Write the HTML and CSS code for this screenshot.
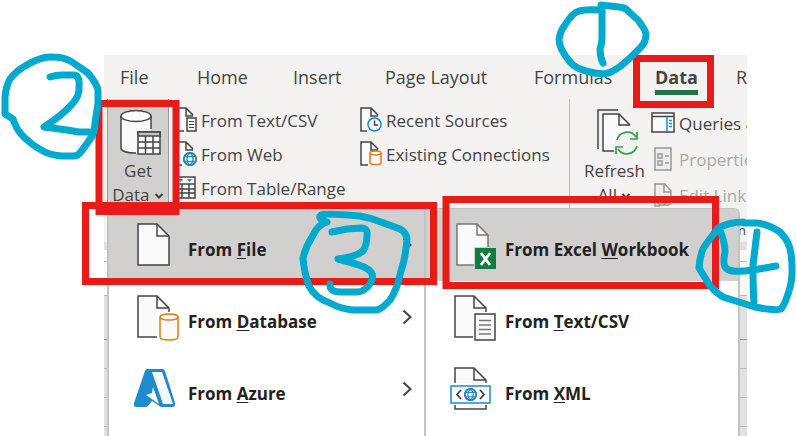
FILE: index.html
```html
<!DOCTYPE html>
<html lang="en">
<head>
<meta charset="utf-8">
<title>Get Data from an Excel workbook</title>
<link rel="stylesheet" href="styles.css">
</head>
<body>
<svg class="defs" aria-hidden="true">
  <symbol id="globe" viewBox="0 0 14 14">
    <circle cx="7" cy="7" r="6.2" fill="#fafafa"/>
    <path d="M7 .8a6.2 6.2 0 1 0 0 12.4A6.2 6.2 0 1 0 7 .8M7 .8C3 4 3 10 7 13.200M7 .8c4 3.200 4 9.200 0 12.400M1.500 4.600h11M1.500 9.400h11" fill="none" stroke="#1e8bcd" stroke-width="1.300"/>
  </symbol>
</svg>
<main class="capture">
  <div class="app">
    <nav class="tabs">
      <a href="#">File</a><a href="#">Home</a><a href="#">Insert</a><a href="#">Page Layout</a><a href="#">Formulas</a><a href="#" class="active"><span>Data</span></a><a href="#">R</a>
    </nav>
    <div class="ribbon">
      <button class="large get-data">
        <svg width="42" height="48" viewBox="0 0 42 48" fill="none" stroke="#444" stroke-width="1.500">
          <path d="M1 7v32c0 3 7 5.500 15 5.500V7z" fill="#fafafa" stroke="none"/>
          <path d="M1 7h30v15H17v22H8L1 39z" fill="#fafafa" stroke="none"/>
          <ellipse cx="16" cy="7" rx="15" ry="5.500" fill="#fafafa"/>
          <path d="M1 7v32c0 3 6 5 15 5M31 7v13"/>
          <path d="M18 23h22v22H18z" fill="#fafafa"/><path d="M18 23h22v4H18z" fill="#c0c0c0"/>
          <path d="M18 33h22M18 39h22M25.500 27v18M33 27v18"/>
        </svg>
        <span>Get</span><span>Data <svg class="caret" width="10" height="8" viewBox="0 0 10 8"><path d="M1.500 2 5 5.500 8.500 2"/></svg></span>
      </button>
      <div class="commands sources">
        <button><svg width="22" height="26" viewBox="0 0 22 26" fill="none" stroke="#444" stroke-width="1.500">
          <path d="M1 1h11l6 7v16H1z" fill="#fafafa" stroke="none"/><path d="M9 24H1V1h10l7 7M11 1v8h7"/>
          <path d="M12 11h9v13h-9z" fill="#fafafa"/><path d="M14 14.500h5M14 17.500h5M14 20.500h5" stroke-width="1"/></svg>From Text/CSV</button>
        <button><svg width="22" height="26" viewBox="0 0 22 26" fill="none" stroke="#444" stroke-width="1.500">
          <path d="M1 1h11l6 7v16H1z" fill="#fafafa" stroke="none"/><path d="M7 24H1V1h10l7 7M11 1v8h7"/>
          <use href="#globe" x="8" y="11" width="14" height="14"/></svg>From Web</button>
        <button><svg width="22" height="26" viewBox="0 0 22 26" fill="none" stroke="#444" stroke-width="1.500">
          <path d="M1 2h19v21H1z" fill="#fafafa"/><path d="M1 9h19M1 14h19M1 18h19M7 9v14M14 9v14"/>
          <path d="M3 4h5L5.500 7zM12 4h5l-2.500 3z" fill="#1e8bcd" stroke="none"/></svg>From Table/Range</button>
      </div>
      <div class="commands recent">
        <button><svg width="22" height="26" viewBox="0 0 22 26" fill="none" stroke="#444" stroke-width="1.500">
          <path d="M1 1h11l6 7v16H1z" fill="#fafafa" stroke="none"/><path d="M7 24H1V1h10l7 7M11 1v8h7"/>
          <circle cx="14.500" cy="17.500" r="6.500" fill="#fafafa" stroke="#1e8bcd"/><path d="M14.500 13.500v4.500H18"/></svg>Recent Sources</button>
        <button><svg width="22" height="26" viewBox="0 0 22 26" fill="none" stroke="#444" stroke-width="1.500">
          <path d="M1 1h11l6 7v16H1z" fill="#fafafa" stroke="none"/><path d="M8 24H1V1h10l7 7M11 1v8h7"/>
          <g fill="#fafafa" stroke="#e07b13"><path d="M10 12v10c0 2 11 2 11 0V12"/><ellipse cx="15.500" cy="12" rx="5.500" ry="2"/></g></svg>Existing Connections</button>
      </div>
      <button class="large refresh">
        <svg width="42" height="48" viewBox="0 0 42 48" fill="none" stroke="#444" stroke-width="1.500">
          <path d="M6 5h16l11 11v26H6z" fill="#fafafa" stroke="none"/>
          <path d="M1 40V1h20M17 42H6V5h16l11 11M22 5v11h11"/>
          <circle cx="30" cy="34" r="12" fill="#f3f2f1" stroke="none"/>
          <path d="M20 31a10.500 10.500 0 0 1 19-3M40 23v7h-7M40 37a10.500 10.500 0 0 1-19 3M19 45v-7h7" stroke="#35a04b" stroke-width="1.700"/>
        </svg>
        <span>Refresh</span><span>All <svg class="caret" width="10" height="8" viewBox="0 0 10 8"><path d="M1.500 2 5 5.500 8.500 2"/></svg></span>
      </button>
      <div class="commands links">
        <button><svg width="24" height="26" viewBox="0 0 24 26" fill="none" stroke="#444" stroke-width="1.500">
          <path d="M1 3h22v19H1z" fill="#fafafa"/><path d="M1 6.500h22"/><path d="M16 7v15M18 10.500h3M18 13.500h3M18 16.500h3" stroke="#1e8bcd"/></svg>Queries &amp;</button>
        <button disabled><svg width="24" height="26" viewBox="0 0 24 26" fill="none" stroke="#999" stroke-width="1.500">
          <path d="M4 2h16v22H4z" fill="#eee"/><path d="M7 8h4v4H7zM7 15h4v4H7zM14 10h4M14 17h4"/></svg>Properties</button>
        <button disabled><svg width="24" height="26" viewBox="0 0 24 26" fill="none" stroke="#999" stroke-width="1.500">
          <path d="M9 24H4V2h10l6 7v6M13 2v8h7" fill="#eee"/><rect x="7" y="17" width="8" height="6" rx="3"/><rect x="12" y="17" width="8" height="6" rx="3"/></svg>Edit Links</button>
      </div>
    </div>
    <div class="sheet"><p class="group-name">n</p><div class="formula-bar"></div><div class="name-box"></div><div class="headings"></div><div class="blank"></div><div class="cells"></div></div>

    <div class="menu main-menu">
      <button class="selected"><svg width="46" height="48" viewBox="0 0 46 48" fill="none" stroke="#444" stroke-width="1.500">
        <path d="M4 3h19l12 12v29H4z" fill="#fafafa"/><path d="M23 3v12h12"/></svg><span>From <u>F</u>ile</span><svg class="arrow" width="10" height="16" viewBox="0 0 10 16"><path d="m1.500 1.500 7 6.500-7 6.500"/></svg></button>
      <button><svg width="46" height="48" viewBox="0 0 46 48" fill="none" stroke="#444" stroke-width="1.500">
        <path d="M4 3h19l12 12v29H4z" fill="#fafafa" stroke="none"/><path d="M23 44H4V3h19l12 12v4M23 3v12h12"/>
        <path d="M23 20h23v28H23z" fill="#fff" stroke="none"/>
        <g fill="#fafafa" stroke="#e07b13"><path d="M26 24v20c0 4 18 4 18 0V24"/><ellipse cx="35" cy="24" rx="9" ry="3"/></g></svg><span>From <u>D</u>atabase</span><svg class="arrow" width="10" height="16" viewBox="0 0 10 16"><path d="m1.500 1.500 7 6.500-7 6.500"/></svg></button>
      <button><svg width="46" height="48" viewBox="0 0 46 48">
        <path d="M13 4h15q2 0 3 2l10 32q1 3-2 4H27l-9-6-4 5q-1 1-3 1H2q-3-1-2-4L11 6q1-2 2-2z" fill="#1e8bcd"/>
        <path d="M18 7h10l11 32H29z" fill="#fafafa"/><path d="m19 22 6 17-13-9 6-2z" fill="#fff"/></svg><span>From <u>A</u>zure</span><svg class="arrow" width="10" height="16" viewBox="0 0 10 16"><path d="m1.500 1.500 7 6.500-7 6.500"/></svg></button>
    </div>

    <div class="menu sub-menu">
      <button class="selected"><svg width="46" height="48" viewBox="0 0 46 48" fill="none" stroke="#777" stroke-width="1.500">
        <path d="M7 3h20l11 11v30H7z" fill="#fafafa"/><path d="M27 3v11h11"/>
        <path d="M24 26h22v22H24z" fill="#d1d0ce" stroke="none"/><path d="M25 27h21v21H25z" fill="#107c41" stroke="none"/>
        <path d="m31 32 9 12M40 32l-9 12" stroke="#fff" stroke-width="2.800"/></svg><span>From Excel <u>W</u>orkbook</span></button>
      <button><svg width="46" height="48" viewBox="0 0 46 48" fill="none" stroke="#444" stroke-width="1.500">
        <path d="M5 3h19l12 12v29H5z" fill="#fafafa" stroke="none"/><path d="M23 44H5V3h19l12 12v4M24 3v12h12"/>
        <path d="M23 19h23v29H23z" fill="#fff" stroke="none"/><path d="M25 21h20v26H25z" fill="#fafafa"/><path d="M29 27.500h12M29 32h12M29 36.500h12M29 41h12" stroke="#777"/></svg><span>From <u>T</u>ext/CSV</span></button>
      <button><svg width="46" height="48" viewBox="0 0 46 48" fill="none" stroke="#444" stroke-width="1.500">
        <path d="M5 3h19l12 12v29H5z" fill="#fafafa" stroke="none"/><path d="M5 19V3h19l12 12v4M24 3v12h12M5 40v4h31v-4"/>
        <path d="M0 18h42v22H0z" fill="#fff" stroke="none"/>
        <path d="M1 21h39v17H1z" fill="#fafafa" stroke="#1e8bcd"/><path d="m11 25-4 4.500 4 4.500M30 25l4 4.500-4 4.500" stroke-width="1.800"/>
        <use href="#globe" x="14" y="23" width="13" height="13"/></svg><span>From <u>X</u>ML</span></button>
    </div>
  </div>

  <svg class="markup" viewBox="0 0 797 436" aria-hidden="true">
    <g class="boxes">
      <rect x="636.500" y="58.500" width="74" height="46"/>
      <rect x="99" y="103.500" width="77" height="108"/>
      <rect x="85.500" y="205.500" width="348" height="76"/>
      <rect x="446" y="199.500" width="269.500" height="86"/>
    </g>
    <g class="ink">
      <path d="M601 5L619 7Q625 7 629 12L638 20Q646 31 646 34Q646 42 641 47L630 58Q616 71 608 73Q602 75 590 72Q576 69 571 63Q559 49 559 40Q560 31 565 25Q572 13 579 11Q585 9 600 10M602 6V38Q602 43 600 49Q600 57 603 63"/>
      <path d="M52 57Q65 57 72 62L88 73Q97 84 98 90V103L95 123Q95 130 92 136Q85 147 79 154Q77 156 73 156H62Q50 155 43 151Q30 144 21 134Q16 128 13 119L5 114V97Q6 86 10 79Q16 71 25 66Q41 56 52 57M50 77Q56 75 62 75H74Q80 76 79 86Q80 95 73 103Q64 114 44 127L67 130 79 132H90"/>
      <path d="M327 222Q317 219 321 215Q324 213 360 216Q371 218 381 222L400 229Q407 233 407 240Q405 260 401 271Q397 290 390 300Q382 309 377 310H353Q341 309 330 303Q315 298 309 286Q304 272 303 258Q306 246 312 237Q318 224 327 222M332 232L347 229 361 228Q368 228 367 235Q367 245 363 251Q356 257 338 259Q366 266 370 271Q375 276 370 284Q364 292 357 292H341Q329 292 330 284"/>
      <path d="M744 223H757Q768 224 780 232Q790 242 791 254Q794 276 789 291Q785 304 781 309Q775 311 755 307L723 297Q712 290 707 281L699 268Q700 254 704 247L718 228Q730 222 743 222M719 228Q725 242 725 252Q722 266 727 269Q733 273 753 270L776 266M757 232L753 265Q753 290 754 302"/>
    </g>
  </svg>
</main>
</body>
</html>
```

FILE: styles.css
```css
* { box-sizing: border-box; }
body { margin: 0; background: #fff; font-family: "Open Sans", "Noto Sans", sans-serif; color: #444; }
.defs { position: absolute; width: 0; height: 0; }
.capture { position: relative; min-height: 100vh; padding: 55px 50px 0 104px; display: flex; overflow: hidden; }
.app { position: relative; flex: 1; min-width: 0; display: flex; flex-direction: column; background: #f3f2f1; }

.tabs { display: grid; grid-template-columns: 77px 96px 92px 149px 121px 81px 1fr; padding-left: 16px; overflow: hidden; line-height: 44px; font-size: 18px; white-space: nowrap; }
.tabs a { color: #444; text-decoration: none; }
.tabs .active { font-weight: 700; }
.active span { display: inline-block; line-height: 26px; border-bottom: 5px solid #217346; }

button { display: flex; align-items: center; margin: 0; padding: 0; border: 0; background: none; font: inherit; color: inherit; text-align: left; white-space: nowrap; }
svg { flex: none; }
.caret, .arrow { fill: none; stroke: #444; stroke-width: 2; }

.ribbon { display: flex; align-items: flex-start; height: 109px; padding-left: 3px; overflow: hidden; font-size: 17px; }
.ribbon > * { flex: none; }
.large { flex-direction: column; height: 109px; line-height: 24px; }
.large svg:first-child { margin: 0 0 2px 6px; }
.large .caret:last-child { margin: 0 0 1px; }
.get-data { width: 62px; padding-top: 10px; background: #d1d0ce; border: solid #999; border-width: 0 1px; }
.refresh { width: 90px; padding-top: 10px; border-left: 1px solid #bbb; }
.commands { display: flex; flex-direction: column; padding-top: 4px; }
.commands button { height: 34px; gap: 4px; }
.sources { width: 185px; padding-left: 6px; }
.recent { width: 215px; padding-left: 6px; }
.links { margin-left: -8px; padding-top: 6px; }
.links button { height: 36px; }
.links button:disabled { color: #aaa; }

.sheet { flex: 1; display: flex; flex-direction: column; background: #fff; overflow: hidden; }
.group-name { margin: 0; height: 34px; padding: 12px 1px 0 0; background: #f3f2f1; font-size: 13px; line-height: 20px; text-align: right; }
.formula-bar { height: 8px; background: #e1dfdd; }
.name-box { height: 12px; background: #fafafa; border-bottom: 1px solid #bbb; }
.headings { height: 34px; background: #fafafa; border-bottom: 1px solid #bbb; }
.blank { height: 44px; background: #e1e1e1; border-bottom: 1px solid #999; }
.cells { flex: 1; background: repeating-linear-gradient(#e1e1e1 0 28px, #bbb 28px 29px); }

.menu { position: absolute; top: 153px; background: #fff; color: #222; font-size: 17px; font-weight: 700; border: solid #c4c4c4; border-width: 1px 2px 0; overflow: hidden; }
.menu button { width: 100%; height: 72px; }
.menu .selected { background: #d1d0ce; }
.menu span { flex: 1; padding-top: 8px; }
.menu u { text-underline-offset: 2px; text-decoration-thickness: 1px; }
.main-menu { left: 3px; width: 319px; bottom: 0; }
.main-menu button { padding: 0 12px 0 25px; gap: 8px; }
.sub-menu { left: 320px; width: 316px; bottom: 0; border-top-right-radius: 6px; }
.sub-menu button { padding-left: 24px; gap: 9px; }

.markup { position: absolute; left: 0; top: 0; width: 797px; height: 436px; fill: none; pointer-events: none; }
.boxes { stroke: #e81b1b; stroke-width: 7; }
.ink { stroke: #00a9ce; stroke-width: 7; stroke-linecap: round; stroke-linejoin: round; }
```
